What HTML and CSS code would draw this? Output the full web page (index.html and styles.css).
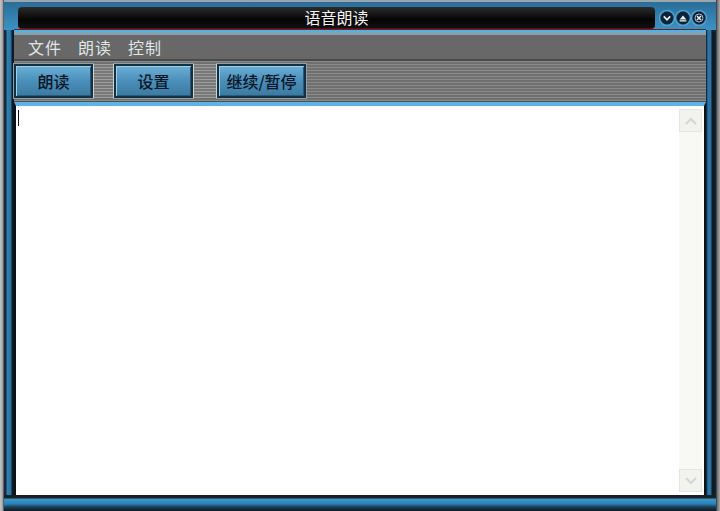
FILE: index.html
```html
<!DOCTYPE html>
<html lang="zh-CN">
<head>
<meta charset="UTF-8">
<title>语音朗读</title>
<link rel="stylesheet" href="styles.css">
</head>
<body>
<div class="window">
  <div class="titlebar">
    <div class="title">语音朗读</div>
    <div class="title-buttons">
      <span class="tbtn">
        <svg width="14" height="14" viewBox="0 0 14 14"><circle cx="7" cy="7" r="6.5" fill="#0d2436"/><path d="M3.8 5.4 L7 8.8 L10.2 5.4" stroke="#e6eef2" stroke-width="1.8" fill="none"/></svg>
      </span>
      <span class="tbtn">
        <svg width="14" height="14" viewBox="0 0 14 14"><circle cx="7" cy="7" r="6.5" fill="#0d2436"/><path d="M3.6 8.4 L7 4.6 L10.4 8.4 Z" fill="#e6eef2"/><rect x="3.6" y="9.2" width="6.8" height="1.3" fill="#e6eef2"/></svg>
      </span>
      <span class="tbtn">
        <svg width="14" height="14" viewBox="0 0 14 14"><circle cx="7" cy="7" r="6.5" fill="#0d2436"/><circle cx="7" cy="7" r="4" fill="none" stroke="#aab8c0" stroke-width="1"/><path d="M5 5 L9 9 M9 5 L5 9" stroke="#e6eef2" stroke-width="1.5"/></svg>
      </span>
    </div>
  </div>

  <div class="body">
    <div class="menubar">
      <span class="menu-item">文件</span>
      <span class="menu-item">朗读</span>
      <span class="menu-item">控制</span>
    </div>

    <div class="toolbar">
      <button class="tool-btn">朗读</button>
      <span class="sep"></span>
      <button class="tool-btn">设置</button>
      <span class="sep wide"></span>
      <button class="tool-btn long">继续/暂停</button>
    </div>

    <div class="editor">
      <div class="text-area"><span class="caret"></span></div>
      <div class="scrollbar">
        <div class="arrow">
          <svg width="14" height="10" viewBox="0 0 14 10"><path d="M2 8 L7 3 L12 8" stroke="#d4d6d0" stroke-width="2" fill="none"/></svg>
        </div>
        <div class="track"></div>
        <div class="arrow">
          <svg width="14" height="10" viewBox="0 0 14 10"><path d="M2 2 L7 7 L12 2" stroke="#d4d6d0" stroke-width="2" fill="none"/></svg>
        </div>
      </div>
    </div>
  </div>

  <div class="bottom"></div>
</div>
</body>
</html>
```

FILE: styles.css
```css
/* skinned window frame */
body {
margin: 0;
padding: 0;
background: #0e1c28;
font-family: "Noto Sans CJK SC", "DejaVu Sans", sans-serif;
}
.window {
width: 720px;
height: 511px;
box-sizing: border-box;
display: flex;
flex-direction: column;
background: linear-gradient(to right, #c8c8c8 0, #9a9a9a 3px, #1a2a38 4px, #1a2a38 6px, #2f7fb0 7px, #2a74a4 11px, #0e1a24 12px, #0e1a24 14px, transparent 14px),
  linear-gradient(to left, #a8a8a8 0, #6a6a6a 3px, #16222e 4px, #0d1822 8px, #2c6f9c 9px, #2a78aa 12px, #0c1620 14px, transparent 14px),
  #2a78aa;
}

.titlebar {
height: 30px;
display: flex;
align-items: flex-start;
padding: 7px 0 0 14px;
box-sizing: border-box;
border-top: 2px solid #9ba6ac;
background: linear-gradient(#2a6d98, #3d92c4);
margin: 0 4px;
}
.title {
width: 637px;
height: 21px;
margin-top: -2px;
background: linear-gradient(#2c2c2c, #050505 60%, #101010);
border-radius: 4px;
border-bottom: 1px solid #5a1010;
color: #f2f2f2;
font-size: 16px;
line-height: 21px;
text-align: center;
}
.title-buttons {
display: flex;
gap: 2px;
margin-left: 5px;
margin-top: 2px;
}
.tbtn {
width: 14px;
height: 14px;
border-radius: 50%;
box-shadow: 0 0 0 1px #5aa8d8;
}
.tbtn svg {
display: block;
}

.body {
flex: 1;
display: flex;
flex-direction: column;
margin: 0 14px 0 14px;
border-top: 3px solid #58b0e0;
box-shadow: 0 -1px 0 #6a2020;
}
.menubar {
height: 24px;
background: #686868;
border-top: 2px solid #9a9a9a;
border-bottom: 2px solid #4a4a4a;
display: flex;
align-items: center;
padding-left: 14px;
gap: 16px;
}
.menu-item {
color: #dfe6e6;
font-size: 16px;
letter-spacing: 1px;
}

.toolbar {
height: 40px;
display: flex;
align-items: center;
background: repeating-linear-gradient(#8a8a8a 0, #8a8a8a 1px, #707070 1px, #707070 3px);
border-bottom: 1px solid #505050;
}
.tool-btn {
height: 34px;
width: 79px;
padding: 0;
border: 2px solid #15303e;
box-shadow: inset 1px 1px 0 #9cd0ea, inset -1px -1px 0 #2a5a78, 0 0 0 1px #8aa0aa;
background: linear-gradient(#6cb0d6, #4a8fba 50%, #3a7aa2);
color: #081628;
font-family: "Noto Sans CJK SC", "DejaVu Sans", sans-serif;
font-size: 16px;
font-weight: 500;
cursor: pointer;
}
.tool-btn.long {
width: 89px;
}
.sep {
width: 21px;
align-self: stretch;
margin: 3px 0;
background: repeating-linear-gradient(#a2a2a2 0, #a2a2a2 1px, #7c7c7c 1px, #7c7c7c 3px);
border-left: 1px solid #d8e0e0;
border-right: 1px solid #d8e0e0;
box-sizing: border-box;
opacity: 0.8;
}
.sep.wide {
width: 24px;
}

.editor {
flex: 1;
display: flex;
background: #ffffff;
border-top: 4px solid #5cb4e4;
border-left: 2px solid #0a1218;
border-right: 2px solid #0a1218;
}
.text-area {
flex: 1;
padding: 4px 2px;
}
.caret {
display: block;
width: 1px;
height: 16px;
background: #111;
}
.scrollbar {
width: 23px;
margin: 3px 2px 3px 0;
display: flex;
flex-direction: column;
background: #f8f8f5;
}
.arrow {
height: 21px;
display: flex;
align-items: center;
justify-content: center;
border: 1px solid #e4e6e0;
background: #f2f2ee;
}
.track {
flex: 1;
}

.bottom {
height: 16px;
margin: 0 4px;
background: linear-gradient(#1a2028 0, #1a2028 3px, #3a98cc 4px, #2a80b4 9px, #1c3c56 12px, #0e1a24 16px);
}
```
